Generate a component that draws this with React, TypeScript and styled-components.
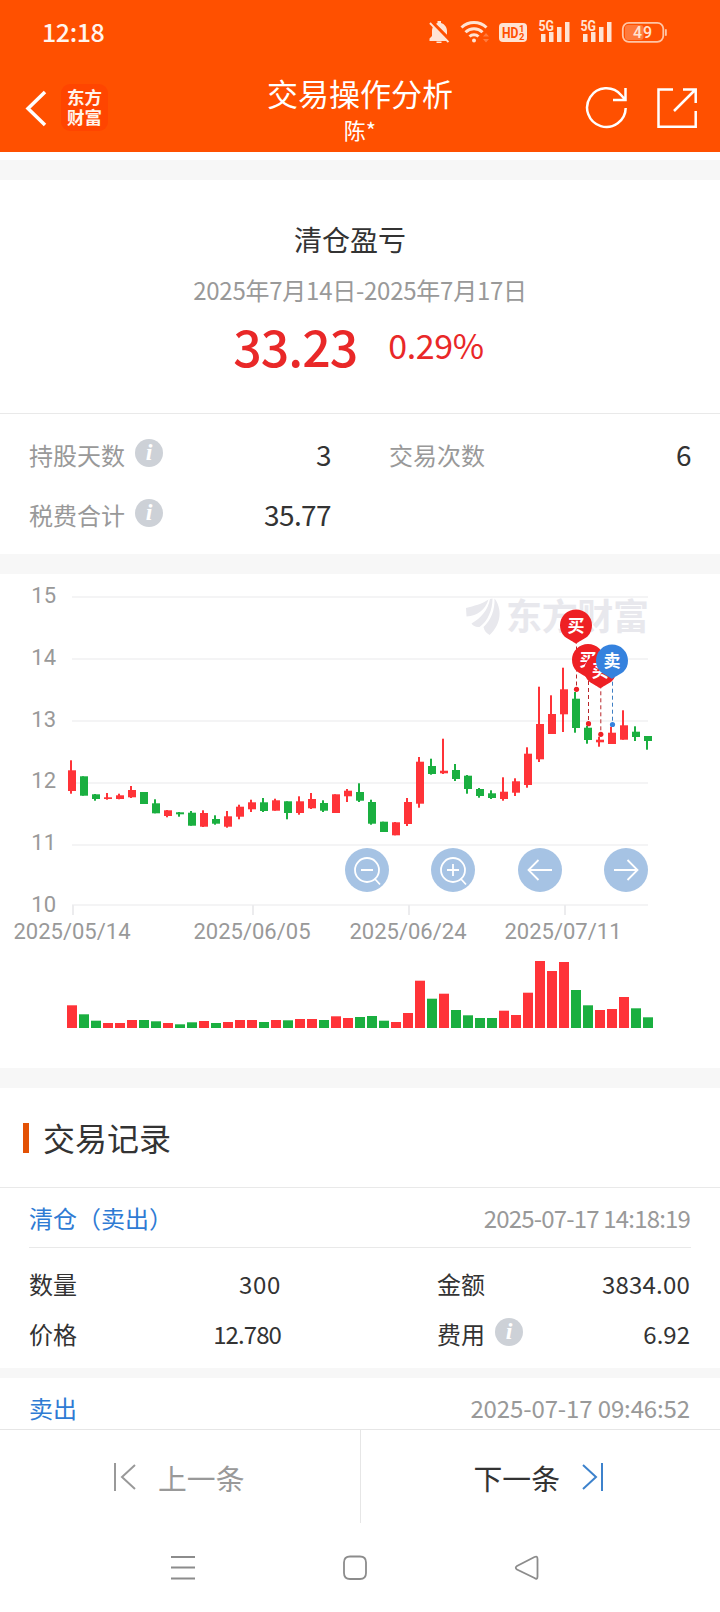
import React from 'react';
import styled, { createGlobalStyle } from 'styled-components';

const GlobalStyle = createGlobalStyle`
  * { box-sizing: border-box; }
  body {
    margin: 0;
    background: #fff;
    color: #333;
    font-family: 'Noto Sans CJK SC', 'Noto Sans', sans-serif;
  }
`;

const Screen = styled.div`
  width: 720px;
  height: 1612px;
  display: flex;
  flex-direction: column;
  overflow: hidden;
  background: #fff;
`;

const Header = styled.header`
  height: 152px;
  flex: none;
  background: #ff5000;
  color: #fff;
`;

const StatusBar = styled.div`
  height: 64px;
  padding: 0 53px 0 42px;
  display: flex;
  align-items: center;
  justify-content: space-between;
`;

const Clock = styled.span`
  font: 500 25px/62px 'Noto Sans CJK SC', sans-serif;
  height: 64px;
  letter-spacing: -0.4px;
  color: #fff5ee;
`;

const TitleBar = styled.div`
  height: 88px;
  display: grid;
  grid-template-columns: 1fr auto 1fr;
`;

const BarSide = styled.div<{ $end?: boolean }>`
  display: flex;
  justify-content: ${(p) => (p.$end ? 'flex-end' : 'flex-start')};
  padding: ${(p) => (p.$end ? '22px 20px 0 0' : '20px 0 0 24px')};
  gap: ${(p) => (p.$end ? '27px' : '13px')};
`;

const Brand = styled.div`
  width: 47px;
  height: 47px;
  padding-bottom: 1px;
  border-radius: 9px;
  background: #ff4500;
  display: flex;
  flex-direction: column;
  align-items: center;
  justify-content: center;
  font: 700 17.5px/20px 'Noto Sans CJK SC', sans-serif;
  color: #fff3ea;
`;

const Heading = styled.div`
  display: flex;
  flex-direction: column;
  align-items: center;
`;

const Title = styled.h1`
  margin: 9px 0 0;
  font-size: 31px;
  line-height: 40px;
  font-weight: 400;
`;

const Subtitle = styled.span`
  font-size: 22px;
  line-height: 30px;
  margin-top: 1px;
`;

const Band = styled.div<{ $height?: number; $top?: number }>`
  flex: none;
  height: ${(p) => p.$height ?? 20}px;
  margin-top: ${(p) => p.$top ?? 0}px;
  background: #f7f7f7;
`;

const Summary = styled.section`
  height: 234px;
  flex: none;
  border-bottom: 1px solid #e9e9e9;
  display: flex;
  flex-direction: column;
  align-items: center;
`;

const SummaryTitle = styled.h2`
  margin: 38px 20px 0 0;
  font-size: 28px;
  line-height: 42px;
  font-weight: 400;
`;

const DateRange = styled.p`
  margin: 13px 0 0;
  font-size: 24px;
  line-height: 34px;
  letter-spacing: -0.25px;
  color: #999;
`;

const Profit = styled.div`
  display: flex;
  align-items: center;
  gap: 31px;
  line-height: 70px;
  margin-top: 3px;
  color: #e92828;
`;

const Amount = styled.span`
  font-size: 50px;
  font-weight: 500;
  letter-spacing: -1px;
`;

const Percent = styled.span`
  font-size: 34px;
  letter-spacing: -0.4px;
  margin-right: 3px;
`;

const Stats = styled.section`
  height: 140px;
  flex: none;
  padding: 10px 29px 0;
  display: grid;
  grid-template-columns: 302px 302px;
  grid-auto-rows: 60px;
  column-gap: 58px;
`;

const Pair = styled.div`
  display: flex;
  align-items: center;
  justify-content: space-between;
`;

const Label = styled.span<{ $dark?: boolean }>`
  display: flex;
  align-items: center;
  gap: 10px;
  font-size: 24px;
  color: ${(p) => (p.$dark ? '#333' : '#999')};
`;

const Value = styled.span<{ $large?: boolean; $tracking?: number }>`
  padding-right: ${(p) => (p.$large ? 0 : 1)}px;
  font-size: ${(p) => (p.$large ? 28 : 24)}px;
  letter-spacing: ${(p) => p.$tracking ?? (p.$large ? -0.6 : 0)}px;
`;

const InfoDot = styled.i`
  width: 28px;
  height: 28px;
  margin-top: -2px;
  border-radius: 50%;
  background: #cdd1d7;
  color: #fff;
  text-align: center;
  font: italic bold 24px/27px 'Liberation Serif', serif;
`;

const ChartSection = styled.section`
  position: relative;
  height: 494px;
  flex: none;
`;

const ChartTools = styled.div`
  position: absolute;
  top: 274px;
  left: 345px;
  width: 303px;
  display: flex;
  justify-content: space-between;
`;

const ToolButton = styled.button`
  width: 44px;
  height: 44px;
  padding: 0;
  border: 0;
  border-radius: 50%;
  background: #a6c3e4;
  display: block;
`;

const SectionHead = styled.div`
  height: 100px;
  flex: none;
  padding: 0 23px 2px;
  border-bottom: 1px solid #e9e9e9;
  display: flex;
  align-items: center;
  gap: 14px;
  font-size: 32px;

  &::before {
    content: '';
    width: 6px;
    height: 30px;
    margin-top: 2px;
    background: #e35205;
  }
`;

const RecordHead = styled.div<{ $open?: boolean }>`
  height: ${(p) => (p.$open ? 60 : 51)}px;
  flex: none;
  margin: 0 29px;
  padding-top: ${(p) => (p.$open ? 0 : 8)}px;
  border-bottom: ${(p) => (p.$open ? '1px solid #e9e9e9' : 'none')};
  display: flex;
  align-items: center;
  justify-content: space-between;
  font-size: 24px;
`;

const Action = styled.span`
  color: #2f7bd4;
`;

const Time = styled.time<{ $tracking: number }>`
  color: #999;
  padding-right: 1px;
  letter-spacing: ${(p) => p.$tracking}px;
`;

const RecordBody = styled.div`
  height: 120px;
  flex: none;
  padding: 10px 29px 0;
  display: grid;
  grid-template-columns: 253px 254px;
  justify-content: space-between;
  grid-auto-rows: 50px;
`;

const Pager = styled.nav`
  height: 94px;
  flex: none;
  border-top: 1px solid #e6e6e6;
  display: flex;
`;

const PagerButton = styled.button<{ $active?: boolean }>`
  flex: 1;
  border: 0;
  border-left: ${(p) => (p.$active ? '1px solid #e6e6e6' : 'none')};
  background: none;
  display: flex;
  align-items: center;
  justify-content: center;
  gap: 21px;
  padding: 1px 2px 0 0;
  font: 400 28.8px 'Noto Sans CJK SC', sans-serif;
  color: ${(p) => (p.$active ? '#333' : '#999')};
`;

const SystemNav = styled.nav`
  flex: 1;
  padding: 31px 181px 0 170px;
  display: flex;
  justify-content: space-between;
`;

type Candle = [up: 0 | 1, top: number, bottom: number, high: number, low: number, volume: number];

// Pixel values are relative to the chart: body top and bottom, high, low, volume height.
const candles: Candle[] = [
  [1, 196.3, 217, 186.3, 219.7, 22.7], [0, 202.3, 221.7, 202.3, 221.7, 13.7],
  [0, 220.3, 225, 220, 226.7, 7.3], [1, 223.3, 225, 219, 225.7, 5],
  [1, 221.3, 225, 219.7, 225.3, 5], [1, 216, 223.3, 212, 224, 8],
  [0, 218, 230, 218, 230, 8], [0, 229.3, 239.3, 225.3, 239.3, 6.7],
  [1, 236.3, 242, 236, 243.3, 5], [0, 238.3, 240.3, 238, 242.7, 3.7],
  [0, 238.7, 251.7, 237, 251.7, 5.7], [1, 239, 252.7, 236.3, 253, 7],
  [0, 245, 249.7, 241.3, 250.7, 5], [1, 242.3, 252.7, 237, 253.7, 6],
  [1, 232.7, 242.7, 230.7, 245.3, 8], [1, 228.3, 235.3, 225.7, 238, 8],
  [0, 228.3, 237, 224, 238, 6], [1, 226.3, 236.7, 224.7, 236.7, 8],
  [0, 227.3, 239, 227.3, 245.3, 7.7], [1, 227.3, 239, 222.3, 240.7, 9],
  [1, 225, 234.3, 219, 235, 9], [0, 229, 236.7, 226.3, 238, 8],
  [1, 220.3, 239, 220.3, 239, 11.7], [1, 216.7, 222.3, 215, 228, 10],
  [0, 218, 226.7, 209.3, 228, 11], [0, 228, 249.7, 225.7, 250.7, 12],
  [0, 247.7, 258, 247.7, 258, 7.3], [1, 248.3, 261.3, 248, 261.3, 6],
  [1, 228, 250, 224, 252, 15], [1, 187.7, 229.7, 183, 233.7, 47.3],
  [0, 192, 200, 184.7, 200.7, 29.3], [1, 196.7, 199.3, 164.7, 200, 34.3],
  [0, 196, 205, 190, 207, 18], [0, 201.7, 215, 201, 219.7, 12.7],
  [0, 215, 222, 214, 223.7, 10], [0, 219.3, 224, 216.3, 225, 10],
  [1, 217.7, 225, 203.3, 226.7, 17.3], [1, 207.3, 218.7, 204.3, 222, 13],
  [1, 179.7, 211, 173.3, 213.7, 35.3], [1, 150, 185.3, 112.7, 188, 67],
  [1, 140, 160, 121.3, 160, 57], [1, 115.3, 140.3, 93.7, 158, 66],
  [0, 124.7, 154, 118, 158.7, 38], [0, 153.7, 166, 152, 169.7, 22.7],
  [1, 165.7, 168.3, 162.7, 172.7, 18], [1, 158.7, 170, 152.7, 170, 19],
  [1, 151.3, 165.7, 136.3, 165.7, 31], [0, 157.7, 163, 152.3, 167, 19.7],
  [0, 162, 167, 162, 175.7, 10.7],
];

const priceLines = [
  { label: '15', y: 23 }, { label: '14', y: 85 }, { label: '13', y: 147 },
  { label: '12', y: 209 }, { label: '11', y: 271 }, { label: '10', y: 331 },
];

const dateTicks = [
  { label: '2025/05/14', x: 72 }, { label: '2025/06/05', x: 252 },
  { label: '2025/06/24', x: 408 }, { label: '2025/07/11', x: 563 },
];

const trades = [
  { text: '买', x: 576, y: 51.5, dot: 115.3, color: '#ee2024', line: '#b8262a' },
  { text: '买', x: 588, y: 86, dot: 149.7, color: '#ee2024', line: '#b8262a' },
  { text: '买', x: 600.3, y: 96.3, dot: 160.3, color: '#ee2024', line: '#b8262a' },
  { text: '卖', x: 612, y: 86.7, dot: 150.5, color: '#3582de', line: '#3f7fc4' },
];

const color = (up: number) => (up ? '#ff3338' : '#1aaf40');

function TradeChart() {
  return (
    <svg width="720" height="494" viewBox="0 0 720 494" fontFamily="Roboto, sans-serif">
      <g fill="#f4f4f5">
        {priceLines.map((l) => <rect key={l.label} x="72" y={l.y - 1} width="576" height="2" />)}
      </g>
      <g fill="#ececee">
        {dateTicks.map((t) => <rect key={t.label} x={t.label === '2025/07/11' ? 564 : t.x} y="331" width="2" height="10" />)}
      </g>
      <g fill="#e8e8ed">
        <path d="M466 34C474 32 482 30 488.500 25.500C485 36 478 41.500 466.500 42.500Z" />
        <path d="M471.500 49.500C481 44 488 36 490 25L492.500 24.500C492.500 36 488 47 479.500 53C476 53.500 473 52 471.500 49.500Z" />
        <path d="M489.500 61C486 59 484 56 483.500 53C491 46 495 36 494.500 24.500C502 34 502 50 489.500 61Z" />
        <text x="506" y="55.500" fontSize="36" fontWeight="700" textLength="143" fontFamily="Noto Sans CJK SC, sans-serif">东方财富</text>
      </g>
      <g fill="#999" fontSize="22">
        {priceLines.map((l) => <text key={l.label} x="56" y={l.label === '10' ? 337.7 : l.label === '12' ? 214.3 : l.label === '11' ? 276.3 : l.y + 5.8} textAnchor="end">{l.label}</text>)}
        {dateTicks.map((t) => <text key={t.label} x={t.x} y="365" textAnchor="middle">{t.label}</text>)}
      </g>
      {candles.map(([up, top, bottom, high, low, volume], i) => (
        <g key={i} fill={color(up)}>
          <rect x={70 + i * 12} y={high} width="2" height={low - high} />
          <rect x={68 + i * 12} y={top} width="8" height={bottom - top} />
          <rect x={67 + i * 12} y={454 - volume} width="10" height={volume} />
        </g>
      ))}
      {trades.map((t) => (
        <g key={t.x}>
          <line x1={t.x + 0.5} x2={t.x + 0.5} y1={t.y} y2={t.dot} stroke={t.line} strokeWidth="1" strokeDasharray="4 3" />
          <circle cx={t.x + 0.5} cy={t.dot} r="2.6" fill={t.color} />
        </g>
      ))}
      {trades.map((t) => (
        <g key={t.x} transform={`translate(${t.x} ${t.y})`}>
          <path d="M0 18.300C-2 16.500-7 14.500-11.500 11A16 16 0 1 1 11.500 11C7 14.500 2 16.500 0 18.300Z" fill={t.color} />
          <text y="6.300" textAnchor="middle" fontSize="17" fontWeight="700" fill="#fff" fontFamily="Noto Sans CJK SC, sans-serif">{t.text}</text>
        </g>
      ))}
    </svg>
  );
}

const toolPaths = [
  'M34 22A12 12 0 1 0 10 22A12 12 0 1 0 34 22M16 22H28M30 31L35 36.5',
  'M34 22A12 12 0 1 0 10 22A12 12 0 1 0 34 22M16 22H28M22 16V28M30 31L35 36.5',
  'M34 22H10.5M20.5 12L10.5 22L20.5 32',
  'M10 22H33.5M23.5 12L33.5 22L23.5 32',
];

function StatusIcons() {
  return (
    <svg width="240" height="26" viewBox="428 19 240 26" fill="#ffe3d3" fontFamily="Roboto, sans-serif">
      <path d="M430.500 41V38.500L433 36V31C433 29 433.500 27.500 434.500 26.300L449 41ZM437 23.800L448 34.800V31C448 27 445.500 24 442 23V21H438.500V23Z" />
      <path d="M437.500 41.500H442.500V43H437.500Z" />
      <path d="M431 23L449.500 42" stroke="#ffe3d3" strokeWidth="2" />
      <path d="M433 22.500L450.500 40.500" stroke="#ff5000" strokeWidth="1.300" />
      <g fill="none" stroke="#ffe3d3" strokeWidth="3">
        <path d="M462.500 27.500A18 18 0 0 1 487.500 27.500" />
        <path d="M466.500 32.300A12 12 0 0 1 483.500 32.300" />
        <path d="M470.500 36.500A6.500 6.500 0 0 1 479.500 36.500" />
      </g>
      <circle cx="475" cy="40.500" r="2" />
      <path d="M484 36.500L487 33L490 36.500ZM484 39L487 42.500L490 39Z" opacity=".3" />
      <rect x="500" y="23" width="28" height="19" rx="4" />
      <g fill="#ff5000" fontWeight="700">
        <text x="503" y="38" fontSize="15.500" textLength="16.500" lengthAdjust="spacingAndGlyphs">HD</text>
        <text x="520" y="32.300" fontSize="9.500">1</text>
        <text x="520" y="40.300" fontSize="9.500">2</text>
      </g>
      {[0, 42].map((dx) => (
        <g key={dx} transform={`translate(${dx} 0)`}>
          <text x="539.500" y="31" fontSize="14.500" fontWeight="700" textLength="15.500" lengthAdjust="spacingAndGlyphs">5G</text>
          <path d="M542 34h4.500v8h-4.500zM550 32h4.500v10h-4.500zM558 27h4.500v15h-4.500zM566 22h4.500v20h-4.500z" />
        </g>
      ))}
      <rect x="623.800" y="22.800" width="40.500" height="19" rx="6" fill="none" stroke="#ffc5a5" strokeWidth="1.800" />
      <rect x="626" y="25" width="18.500" height="15" rx="3" fill="#ff7a3c" />
      <rect x="666" y="29" width="1.800" height="7" rx=".9" fill="#ffc5a5" />
      <text x="644" y="37.700" fontSize="16" fontWeight="500" textAnchor="middle" letterSpacing=".8">49</text>
    </svg>
  );
}

export default function App() {
  return (
    <Screen>
      <GlobalStyle />
      <Header>
        <StatusBar>
          <Clock>12:18</Clock>
          <StatusIcons />
        </StatusBar>
        <TitleBar>
          <BarSide>
            <svg width="24" height="48" viewBox="24 84 24 48" fill="none" stroke="#fff" strokeWidth="3.500">
              <path d="M45 92L28 108.500L45 125" />
            </svg>
            <Brand><span>东方</span><span>财富</span></Brand>
          </BarSide>
          <Heading>
            <Title>交易操作分析</Title>
            <Subtitle>陈*</Subtitle>
          </Heading>
          <BarSide $end>
            <svg width="44" height="44" viewBox="584 86 44 44" fill="none" stroke="#fff" strokeWidth="2.500">
              <path d="M625.700 108A19.300 19.300 0 1 1 621 95L625.500 100M625.500 88V100H613" />
            </svg>
            <svg width="45" height="44" viewBox="655 86 45 44" fill="none" stroke="#fff" strokeWidth="2.500">
              <path d="M673 89.500H658.500V126.700H695.700V111M683 89.500H695.700V103M674 111L695 90" />
            </svg>
          </BarSide>
        </TitleBar>
      </Header>
      <Band $top={8} />
      <Summary>
        <SummaryTitle>清仓盈亏</SummaryTitle>
        <DateRange>2025年7月14日-2025年7月17日</DateRange>
        <Profit>
          <Amount>33.23</Amount>
          <Percent>0.29%</Percent>
        </Profit>
      </Summary>
      <Stats>
        <Pair><Label>持股天数<InfoDot>i</InfoDot></Label><Value $large>3</Value></Pair>
        <Pair><Label>交易次数</Label><Value $large>6</Value></Pair>
        <Pair><Label>税费合计<InfoDot>i</InfoDot></Label><Value $large>35.77</Value></Pair>
      </Stats>
      <Band />
      <ChartSection>
        <TradeChart />
        <ChartTools>
          {toolPaths.map((d) => (
            <ToolButton key={d}>
              <svg width="44" height="44" viewBox="0 0 44 44" fill="none" stroke="#fff" strokeWidth="1.800"><path d={d} /></svg>
            </ToolButton>
          ))}
        </ChartTools>
      </ChartSection>
      <Band />
      <SectionHead>交易记录</SectionHead>
      <RecordHead $open>
        <Action>清仓（卖出）</Action>
        <Time $tracking={-0.82}>2025-07-17 14:18:19</Time>
      </RecordHead>
      <RecordBody>
        <Pair><Label $dark>数量</Label><Value $tracking={0.7}>300</Value></Pair>
        <Pair><Label $dark>金额</Label><Value $tracking={0.2}>3834.00</Value></Pair>
        <Pair><Label $dark>价格</Label><Value $tracking={-0.9}>12.780</Value></Pair>
        <Pair><Label $dark>费用<InfoDot>i</InfoDot></Label><Value>6.92</Value></Pair>
      </RecordBody>
      <Band $height={10} />
      <RecordHead>
        <Action>卖出</Action>
        <Time $tracking={-0.12}>2025-07-17 09:46:52</Time>
      </RecordHead>
      <Pager>
        <PagerButton>
          <svg width="24" height="30" viewBox="0 0 24 30" fill="none" stroke="#999" strokeWidth="2">
            <path d="M2 1V29M22 3L9 15L22 27" />
          </svg>
          上一条
        </PagerButton>
        <PagerButton $active>
          下一条
          <svg width="24" height="30" viewBox="0 0 24 30" fill="none" stroke="#3d82cc" strokeWidth="2">
            <path d="M2 3L15 15L2 27M21 1V29" />
          </svg>
        </PagerButton>
      </Pager>
      <SystemNav>
        {['M1 3H25M1 13.500H25M1 24.500H25', 'M8 2.500H18Q24 2.500 24 8.500V19Q24 25 18 25H8Q2 25 2 19V8.500Q2 2.500 8 2.500Z', 'M21.500 3Q24.500 1.500 24.500 5V22.500Q24.500 26 21.500 24L4 15.500Q1.500 13.700 4 12Z'].map((d) => (
          <svg key={d} width="26" height="28" viewBox="0 0 26 28" fill="none" stroke="#8c8c8c" strokeWidth="1.800"><path d={d} /></svg>
        ))}
      </SystemNav>
    </Screen>
  );
}
